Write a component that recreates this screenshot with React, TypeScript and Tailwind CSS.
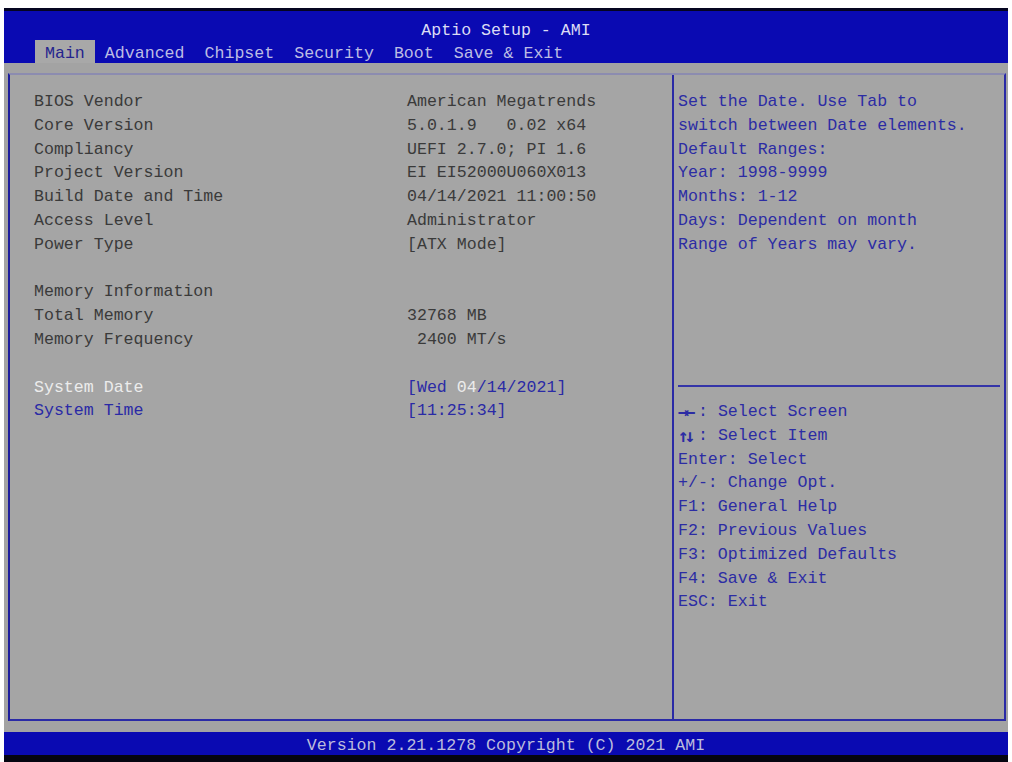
const mono = { fontFamily: '"Liberation Mono", "DejaVu Sans Mono", monospace' };
const arrowFont = { fontFamily: '"DejaVu Sans Mono", monospace' };

const tabs = ["Main", "Advanced", "Chipset", "Security", "Boot", "Save & Exit"];

type Row = { label?: string; value?: string; kind?: "info" | "active" | "item" };

const rows: Row[] = [
  { label: "BIOS Vendor", value: "American Megatrends" },
  { label: "Core Version", value: "5.0.1.9   0.02 x64" },
  { label: "Compliancy", value: "UEFI 2.7.0; PI 1.6" },
  { label: "Project Version", value: "EI EI52000U060X013" },
  { label: "Build Date and Time", value: "04/14/2021 11:00:50" },
  { label: "Access Level", value: "Administrator" },
  { label: "Power Type", value: "[ATX Mode]" },
  {},
  { label: "Memory Information" },
  { label: "Total Memory", value: "32768 MB" },
  { label: "Memory Frequency", value: " 2400 MT/s" },
  {},
  { label: "System Date", kind: "active" },
  { label: "System Time", value: "[11:25:34]", kind: "item" },
];

const helpTop = [
  "Set the Date. Use Tab to",
  "switch between Date elements.",
  "Default Ranges:",
  "Year: 1998-9999",
  "Months: 1-12",
  "Days: Dependent on month",
  "Range of Years may vary.",
];

const keys = [
  "Enter: Select",
  "+/-: Change Opt.",
  "F1: General Help",
  "F2: Previous Values",
  "F3: Optimized Defaults",
  "F4: Save & Exit",
  "ESC: Exit",
];

function InfoRow({ row }: { row: Row }) {
  if (!row.label) return <div className="h-[23.8px]" />;
  const labelColor =
    row.kind === "active" ? "text-[#ececec]" : row.kind === "item" ? "text-[#2a2aa6]" : "text-[#3a3a3a]";
  return (
    <div className="grid grid-cols-[373px_1fr] h-[23.8px] leading-[23.8px] whitespace-pre">
      <span className={labelColor}>{row.label}</span>
      {row.kind === "active" ? (
        <span className="text-[#2a2aa6]">
          [Wed <span className="text-[#ececec]">04</span>/14/2021]
        </span>
      ) : (
        <span className={row.kind === "item" ? "text-[#2a2aa6]" : "text-[#3a3a3a]"}>{row.value}</span>
      )}
    </div>
  );
}

function ArrowKey({ arrows, text }: { arrows: string; text: string }) {
  return (
    <div className="h-[23.8px] leading-[23.8px] flex">
      <span className="inline-block w-[20px] font-bold tracking-[-4px] text-[18px]" style={arrowFont}>
        {arrows}
      </span>
      <span>{text}</span>
    </div>
  );
}

export default function App() {
  return (
    <div className="w-[1012px] h-[762px] bg-white pt-[8px] px-[4px] overflow-hidden" style={mono}>
      <div className="flex flex-col h-full bg-[#a3a3a3] text-[16.6px]">
        {/* title bar + tabs */}
        <div className="h-[55px] bg-[#0a0ab2] border-t-[3px] border-[#050520] flex flex-col">
          <div className="h-[29px] pt-[8px] text-center leading-[23px] text-[#dcdcf4] whitespace-pre">
            Aptio Setup - AMI
          </div>
          <div className="flex pl-[31px] h-[23px] leading-[23px]">
            {tabs.map((t) =>
              t === "Main" ? (
                <span key={t} className="px-[10px] pt-[2px] bg-[#a8a8a8] text-[#24248e]">
                  {t}
                </span>
              ) : (
                <span key={t} className="px-[10px] pt-[2px] text-[#bcbce4]">
                  {t}
                </span>
              )
            )}
          </div>
        </div>

        {/* main panel */}
        <div className="flex-1 pt-[10px] pb-[11px] pl-[4px] pr-[2px] flex">
          <div className="flex-1 flex bg-[#a5a5a5] border-t-2 border-t-[#8c8cb0] border-l-2 border-l-[#1c1c9c] border-b-2 border-b-[#2a2aa6] border-r-2 border-r-[#2a2aa6]">
            <div className="w-[662px] pl-[24px] pt-[15px]">
              {rows.map((r, i) => (
                <InfoRow key={i} row={r} />
              ))}
            </div>
            <div className="w-[2px] bg-[#2a2aa6]" />
            <div className="flex-1 flex flex-col text-[#2c2ca4]">
              <div className="h-[310px] pl-[4px] pt-[15px] whitespace-pre">
                {helpTop.map((l) => (
                  <div key={l} className="h-[23.8px] leading-[23.8px]">
                    {l}
                  </div>
                ))}
              </div>
              <div className="h-[2px] bg-[#3434a8] ml-[4px] mr-[4px]" />
              <div className="pl-[4px] pt-[13px] whitespace-pre">
                <ArrowKey arrows="→←" text=": Select Screen" />
                <ArrowKey arrows="↑↓" text=": Select Item" />
                {keys.map((k) => (
                  <div key={k} className="h-[23.8px] leading-[23.8px]">
                    {k}
                  </div>
                ))}
              </div>
            </div>
          </div>
        </div>

        {/* footer */}
        <div className="h-[23px] bg-[#0a0ab2] text-center pt-[2px] leading-[23px] text-[#bcbcdc] whitespace-pre">
          Version 2.21.1278 Copyright (C) 2021 AMI
        </div>
        <div className="h-[7px] bg-[#050510]" />
      </div>
    </div>
  );
}
